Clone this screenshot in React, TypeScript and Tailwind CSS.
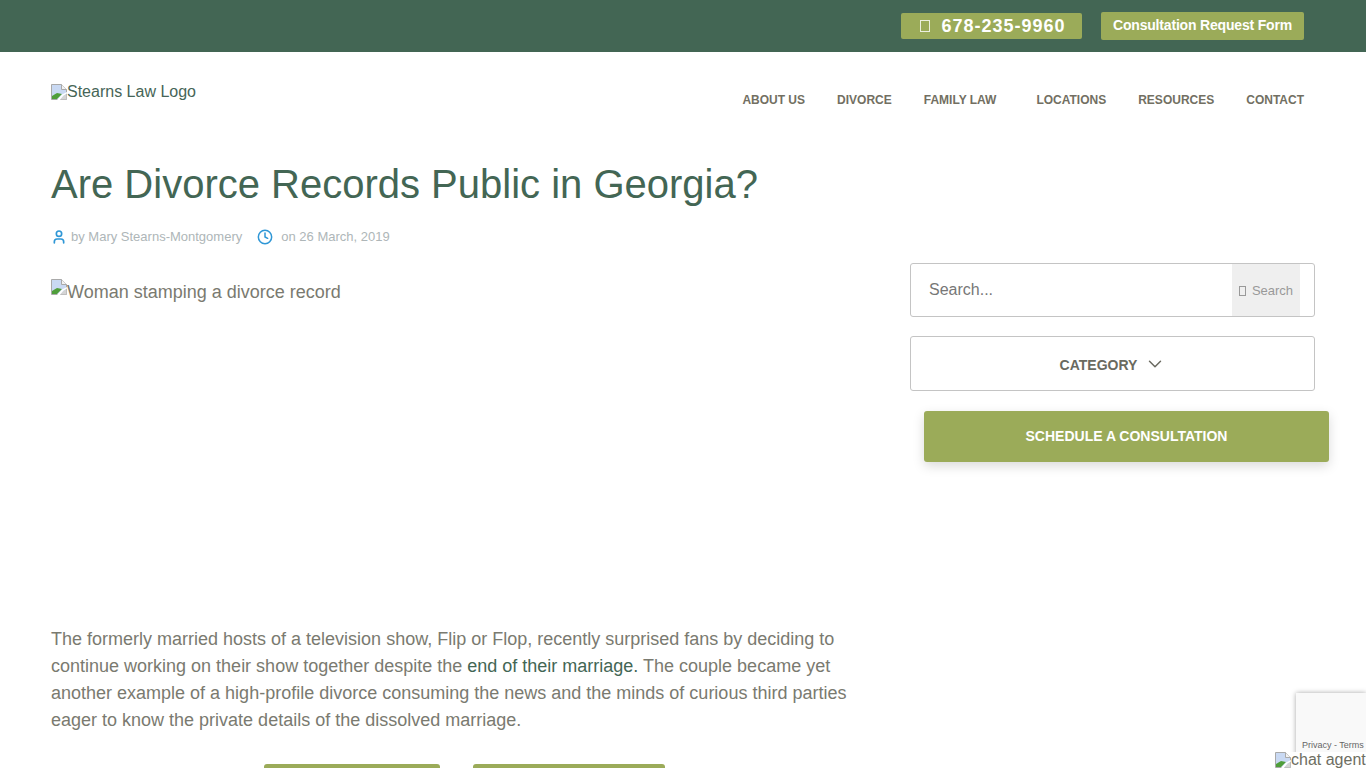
import React from 'react';
import { ChevronDown, Clock, User } from 'lucide-react';

const navItems = [
  { label: 'ABOUT US', className: 'mr-8' },
  { label: 'DIVORCE', className: 'mr-8' },
  { label: 'FAMILY LAW', className: 'mr-10' },
  { label: 'LOCATIONS', className: 'mr-8' },
  { label: 'RESOURCES', className: 'mr-8' },
  { label: 'CONTACT', className: '' },
];

// Browser's broken image placeholder
const BrokenImage: React.FC = () => (
  <svg width="16" height="16" viewBox="0 0 16 16" className="shrink-0">
    <path d="M0.5 0.5H10.5L15.5 5.5V15.5H0.5Z" fill="#c9d9f3" stroke="#a9a9a9" />
    <path d="M10.5 0.5V5.5H15.5" fill="#f2f2f2" stroke="#a9a9a9" />
    <path d="M1 15V12L6 9L11 10L6 15Z" fill="#4f9e3a" />
    <path d="M6 16L11 10.5L16 8V9.5L12.5 11.5L9 16Z" fill="#ffffff" />
    <path d="M9 15.5L12.5 12L15.5 10V15.5Z" fill="#d4d4d4" />
  </svg>
);

const Tofu: React.FC<{ className: string }> = ({ className }) => (
  <span className={`inline-block border ${className}`} />
);

export default function App() {
  return (
    <div className="relative h-screen overflow-hidden bg-white font-['Liberation_Sans',Arial,sans-serif]">
      <div className="flex h-[52px] items-center justify-end gap-[19px] bg-[#436654] pr-[62px]">
        <a className="flex h-[26px] w-[181px] items-center justify-center gap-[11px] rounded-[2px] bg-[#9bab59] pl-[3px] text-[18px] font-bold tracking-[1px] text-white">
          <Tofu className="h-[12px] w-[10px] border-white/80" />
          <span>678-235-9960</span>
        </a>
        <a className="flex h-[28px] w-[203px] items-center justify-center rounded-[2px] bg-[#9bab59] pb-[1px] text-[14px] font-bold tracking-[-0.18px] text-white">
          Consultation Request Form
        </a>
      </div>

      <header className="flex h-[110px] items-start justify-between pl-[51px] pr-[62px]">
        <div className="mt-[31px] flex items-center text-[16px] leading-[18px] text-[#466557]">
          <BrokenImage />
          <span>Stearns Law Logo</span>
        </div>
        <nav className="mt-[40px] flex text-[12px] font-bold leading-[16px] text-[#726f62]">
          {navItems.map((item) => (
            <a key={item.label} className={item.className}>
              {item.label}
            </a>
          ))}
        </nav>
      </header>

      <main className="flex items-start pl-[51px]">
        <article className="w-[859px] shrink-0">
          <h1 className="text-[40px] font-normal leading-[44px] text-[#436654]">
            Are Divorce Records Public in Georgia?
          </h1>
          <div className="mt-[23px] flex items-center text-[13px] leading-[16px] text-[#aeb6b8]">
            <User size={16} strokeWidth={2.5} className="text-[#2f97d6]" />
            <span className="ml-[4px]">by Mary Stearns-Montgomery</span>
            <Clock size={16} strokeWidth={2.25} className="ml-[15px] text-[#2f97d6]" />
            <span className="ml-[8px]">on 26 March, 2019</span>
          </div>
          <div className="mt-[34px] flex h-[347px] items-start text-[18px] leading-[21px] text-[#7a7a70]">
            <BrokenImage />
            <span className="mt-[3px]">Woman stamping a divorce record</span>
          </div>
          <p className="w-[805px] text-[18px] leading-[27px] text-[#7a7a70]">
            The formerly married hosts of a television show, Flip or Flop, recently surprised fans by deciding to
            continue working on their show together despite the{' '}
            <a className="text-[#436654]">end of their marriage.</a> The couple became yet another example of a
            high-profile divorce consuming the news and the minds of curious third parties eager to know the private
            details of the dissolved marriage.
          </p>
          <div className="ml-[213px] mt-[30px] flex gap-[33px]">
            <div className="h-[40px] w-[176px] rounded-[3px] bg-[#9bab59]" />
            <div className="h-[40px] w-[192px] rounded-[3px] bg-[#9bab59]" />
          </div>
        </article>

        <aside className="mt-[101px] w-[405px] shrink-0">
          <div className="flex h-[54px] items-stretch rounded-[3px] border border-[#c4c4c4] pr-[14px]">
            <div className="flex flex-1 items-center pl-[18px] text-[16px] text-[#777777]">Search...</div>
            <div className="flex w-[68px] items-center justify-center gap-[6px] bg-[#efefef] pt-[1px] text-[13px] text-[#999999]">
              <Tofu className="h-[10px] w-[7px] border-[#999999]" />
              <span>Search</span>
            </div>
          </div>
          <div className="mt-[19px] flex h-[55px] items-center justify-center gap-[7px] rounded-[3px] border border-[#c4c4c4] pl-[1px] pt-[3px] text-[14px] font-bold text-[#6a6a60]">
            <span>CATEGORY</span>
            <ChevronDown size={22} strokeWidth={1.6} className="mb-[3px]" />
          </div>
          <a className="ml-[14px] mt-[20px] flex h-[51px] w-[405px] items-center justify-center rounded-[3px] bg-[#9bab59] text-[14px] font-bold text-white shadow-[0_4px_12px_rgba(0,0,0,0.15)]">
            SCHEDULE A CONSULTATION
          </a>
        </aside>
      </main>

      {/* reCAPTCHA badge */}
      <div className="absolute left-[1296px] top-[693px] h-[75px] w-[70px] bg-[#f9f9f9] shadow-[0_0_5px_rgba(0,0,0,0.35)]">
        <div className="absolute left-[6px] top-[46px] whitespace-nowrap text-[9px] leading-[12px] text-[#666666]">
          Privacy - Terms
        </div>
      </div>
      <div className="absolute left-[1275px] top-[752px] flex items-center whitespace-nowrap bg-white text-[16px] leading-[16px] text-[#6e6e62]">
        <BrokenImage />
        <span>chat agent</span>
      </div>
    </div>
  );
}
